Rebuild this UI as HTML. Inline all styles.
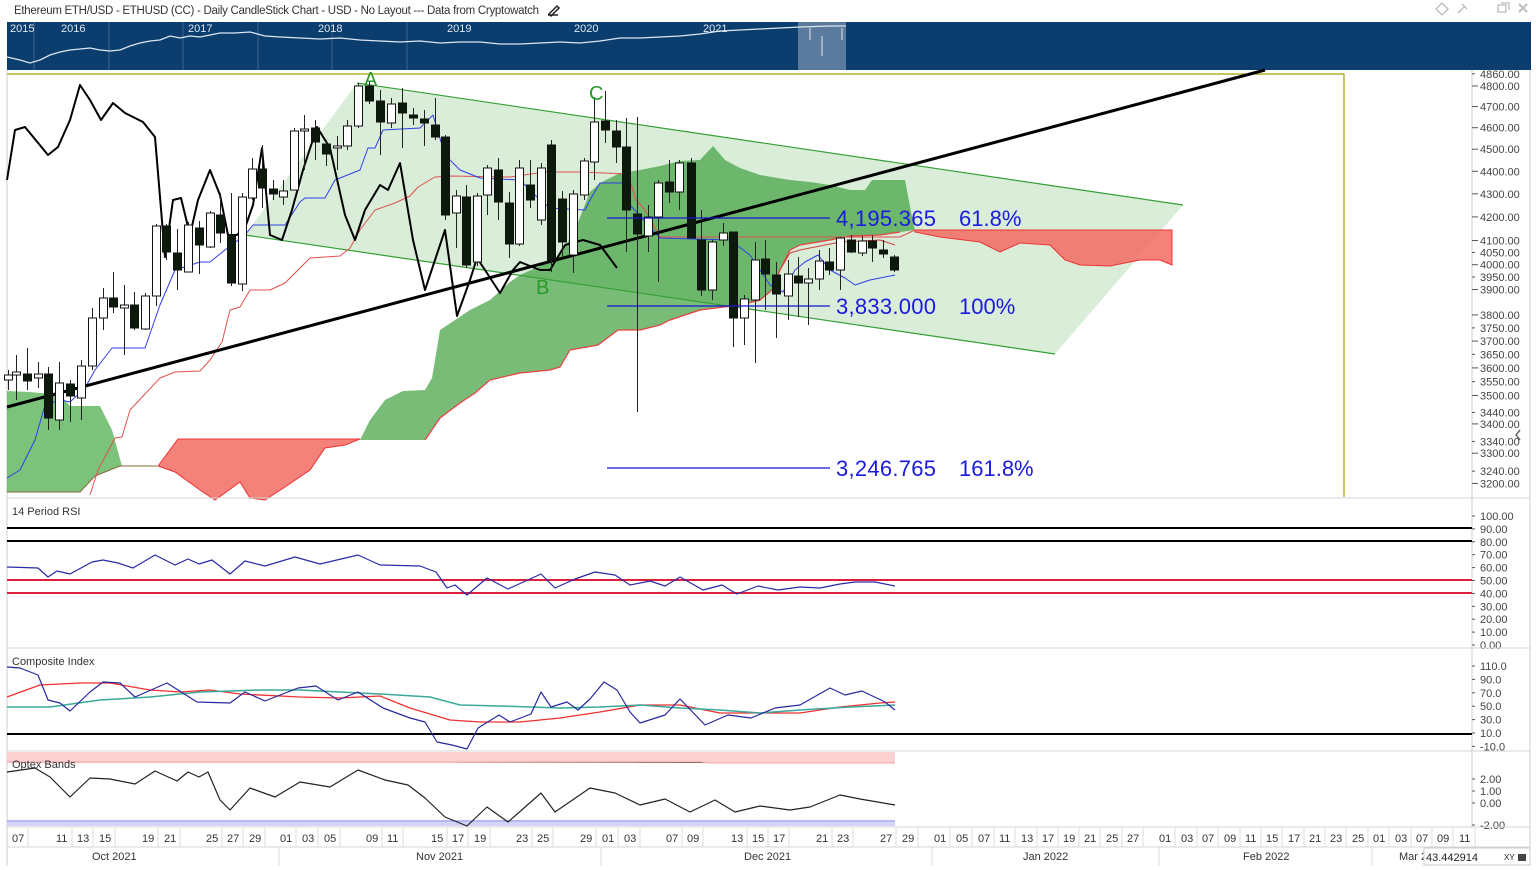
<!DOCTYPE html>
<html><head><meta charset="utf-8"><style>
html,body{margin:0;padding:0;background:#fff;overflow:hidden}
body{width:1536px;height:870px;position:relative;font-family:"Liberation Sans",sans-serif}
svg text{font-family:"Liberation Sans",sans-serif}
</style></head><body>
<svg id="s" width="1536" height="870" viewBox="0 0 1536 870" xmlns="http://www.w3.org/2000/svg">
<rect width="1536" height="870" fill="#fff"/>
<text x="14" y="14" font-size="11.5" fill="#333" textLength="525">Ethereum ETH/USD - ETHUSD (CC) - Daily CandleStick Chart - USD - No Layout --- Data from Cryptowatch</text>
<path d="M549 14l8-8 2 2-8 8zM548 15h10" stroke="#222" stroke-width="1.5" fill="none"/>
<g stroke="#bbb" fill="none" stroke-width="1.3"><path d="M1442 3l6 6-6 6-6-6z"/><path d="M1458 13l6-6M1462 4l5 5"/><path d="M1498 5h8v7h-8zM1501 3h8v7"/><path d="M1519 4l8 8M1527 4l-8 8" stroke-width="2"/></g>
<rect x="7" y="22" width="1524" height="48" fill="#0b3d6f"/>
<rect x="798" y="22" width="48" height="48" fill="#5a7a9e"/>
<g stroke="#3a6590" stroke-width="1"><path d="M34 22v48M109 22v48M183 22v48M258 22v48M332 22v48M407 22v48"/></g>
<g font-size="11" fill="#dfe8f2"><text x="10" y="32">2015</text><text x="61" y="32">2016</text><text x="188" y="32">2017</text><text x="318" y="32">2018</text><text x="447" y="32">2019</text><text x="574" y="32">2020</text><text x="703" y="32">2021</text></g>
<path d="M7 57L20 60 30 63 40 60 50 55 60 52 70 50 80 49 90 48 100 50 110 51 120 50 130 46 140 43 150 41 160 40 170 36 180 38 190 36 200 37 210 35 220 33 235 33 250 32 265 36 280 37 300 38 320 39 340 38 360 40 380 41 400 42 420 41 440 43 460 42 480 42 500 44 520 44 540 43 560 42 580 43 600 41 620 38 640 38 660 37 680 36 700 34 720 31 740 30 760 29 780 28 800 27 830 26 846 26" stroke="#dde6f0" stroke-width="1.3" fill="none"/>
<path d="M810 28v12M842 28v12M822 36v20" stroke="#9fb0c4" stroke-width="2"/>
<path d="M7 74H1344V497" stroke="#a0a000" stroke-width="1.2" fill="none"/>
<path d="M7 70V866" stroke="#ccc"/>
<path d="M1472 70V828" stroke="#ccc"/>
<path d="M1530 70V866" stroke="#ccc"/>
<g id="main"></g>
<g stroke="#1515d0" stroke-width="1.2"><path d="M607 218H830M607 306H830M607 468H830"/></g>
<g font-size="22" fill="#1a1ae0"><text x="836" y="226" textLength="100">4,195.365</text><text x="959" y="226">61.8%</text><text x="836" y="314" textLength="100">3,833.000</text><text x="959" y="314">100%</text><text x="836" y="476" textLength="100">3,246.765</text><text x="959" y="476">161.8%</text></g>
<g font-size="20" fill="#2a9a2a"><text x="364" y="86">A</text><text x="589" y="100">C</text><text x="536" y="294">B</text></g>
<g id="pax" font-size="11" fill="#444"></g>
<path d="M1520 430l-4 5 4 5" stroke="#666" stroke-width="1.5" fill="none"/>
<path d="M7 498H1530M7 648H1530M7 751H1530M7 827H1530M7 847H1530" stroke="#d5d5d5"/>
<rect x="7" y="752" width="888" height="11" fill="#fbd0d0"/>
<path d="M7 762H700L710 763H895" stroke="#f3a3a3"/>
<rect x="7" y="820" width="888" height="6" fill="#d4d4fb"/>
<path d="M7 821H895" stroke="#9b9bf0"/>
<text x="12" y="515" font-size="11" fill="#333">14 Period RSI</text>
<text x="12" y="665" font-size="11" fill="#333">Composite Index</text>
<text x="12" y="768" font-size="11" fill="#333">Optex Bands</text>
<path d="M7 528H1472M7 541H1472M7 734H1472" stroke="#000" stroke-width="2"/>
<path d="M7 580H1472M7 593H1472" stroke="#dc1f3c" stroke-width="2"/>
<g id="ind"></g>
<g id="dax" font-size="11" fill="#333"></g>
<rect x="1424" y="848" width="106" height="17" fill="#fff" stroke="#ccc"/>
<text x="1426" y="861" font-size="11" fill="#222">43.442914</text>
<text x="1504" y="860" font-size="8" fill="#222">XY</text>
<rect x="1518" y="854" width="8" height="7" fill="#444"/>
</svg>
<script>
var NS="http://www.w3.org/2000/svg";
function el(p,t,a){var e=document.createElementNS(NS,t);for(var k in a)e.setAttribute(k,a[k]);p.appendChild(e);return e;}
var M=document.getElementById('main');
function poly(pts,fill,op,stroke,sw){return el(M,'path',{d:'M'+pts.join(' ')+(fill!='none'?'Z':''),fill:fill,'fill-opacity':op||1,stroke:stroke||'none','stroke-width':sw||1});}
function line(g,pts,stroke,sw){el(g,'path',{d:'M'+pts.join(' '),fill:'none',stroke:stroke,'stroke-width':sw||1,'stroke-linejoin':'round'});}
poly(['245,235','357,83','1183,205','1055,354'],'#b9deb9',0.55);
poly(['7,391','30,392','60,395','70,406','100,406','112,430','122,466','157,466','120,466','95,476','80,492','7,492'],'#4fae4f',0.75);
poly(['158,466','178,439','360,439','345,445','325,448','310,470','285,487','265,500','250,498','240,482','215,500','200,490','175,472'],'#f26b63',0.85,'#e33',1);
var ga=['360,440','370,420','385,400','403,391','425,390','432,378','440,330','455,320','470,310','490,300','510,282','520,275','540,266','560,255','575,230','590,192','600,183','620,173','640,170','660,166','680,161','700,160','713,146','725,160','740,168','760,175','790,180','810,182','830,185','850,190','865,190','872,180','905,180','912,217','915,230'];
var gb=['900,232','880,235','850,236','830,240','800,245','790,250','780,270','772,290','760,300','740,305','700,310','670,320','660,325','640,330','618,330','598,345','570,350','560,367','550,370','520,373','490,380','475,393','460,403','440,418','425,440'];
poly(ga.concat(gb),'#3fa03f',0.7);
line(M,gb,'#e84040',1.2);
line(M,['7,492','80,492','95,476','120,466','157,466'],'#8a6a3a',1);
poly(['915,230','1172,230','1172,265','1160,260','1140,260','1110,266','1080,265','1065,260','1050,245','1020,243','1000,252','980,242','940,237','915,232'],'#f26b63',0.85,'#e33',1);
line(M,['357,83','1183,205'],'#35a035',1.2);
line(M,['245,235','1055,354'],'#35a035',1.2);
line(M,['90,495','98,470','115,438','122,437','130,410','160,378','175,372','200,371','210,360','222,342','230,310','240,307','250,290','270,290','285,283','300,268','310,258','340,256','350,248','360,230','375,210','395,203','410,196','418,187','435,177','450,176','510,177','545,172','557,172','580,172','628,174','636,200','645,210','660,237','900,237','915,230'],'#e05050',1);
line(M,['760,300','772,290','780,270','790,253','800,250','840,242','880,240','895,245'],'#d04040',1);
line(M,['7,478','20,470','35,440','45,405','60,400','70,402','85,388','95,370','112,348','145,348','160,305','175,270','200,262','210,262','225,250','245,235','253,225','285,225','300,202','305,198','325,198','335,180','360,170','368,148','375,148','383,130','420,128','433,115','445,155','460,170','480,178','520,180','540,200','550,208','585,210','590,200','600,183','626,183','630,205','660,238','730,240','750,255','760,270','770,285','783,292','795,270','805,262','818,255','830,270','845,278','855,285','870,280','895,275'],'#2f3fe8',1);
line(M,['7,180','15,130','25,127','48,155','58,147','70,120','80,85','90,100','101,120','113,103','125,113','143,122','155,137','165,257','173,200','181,198','190,235','198,200','210,170','220,195','228,235','237,235','246,225','253,205','262,148','270,235','282,240','292,210','303,170','317,127','330,148','345,215','355,240','365,210','380,185','388,190','400,163','413,240','425,290','445,230','457,316','470,280','477,258','485,270','500,293','513,270','520,262','540,270','550,270','565,245','583,240','600,245','617,268'],'#000',2);
line(M,['7,407','1265,70'],'#000',3);
var C=[[8,375,380,370,390,0],[16,372,375,355,400,0],[27,374,381,348,390,1],[38,374,378,362,388,0],[48,374,418,367,430,1],[59,383,420,362,430,0],[70,384,396,380,422,1],[81,366,398,360,420,0],[92,318,366,308,370,0],[103,298,318,288,330,0],[113,298,307,272,313,1],[124,305,308,285,355,0],[134,305,328,292,330,1],[145,296,329,293,330,0],[156,226,296,224,306,0],[166,226,252,224,260,1],[177,253,270,229,290,1],[188,225,272,222,272,0],[199,228,245,221,274,1],[210,213,247,211,248,0],[220,215,233,193,243,1],[231,235,283,193,286,1],[242,197,284,193,291,0],[252,169,198,158,200,0],[262,169,188,145,208,1],[273,189,194,180,200,1],[283,191,197,180,205,0],[294,131,190,128,190,0],[304,129,131,115,170,0],[315,128,142,120,160,1],[326,144,154,140,166,1],[337,146,148,136,170,0],[347,126,146,120,150,0],[358,86,126,83,128,0],[369,86,101,82,104,1],[380,101,122,90,155,1],[391,104,123,98,128,0],[402,103,113,88,148,1],[413,115,118,108,125,1],[424,119,123,110,146,1],[435,125,137,98,140,1],[445,137,215,135,220,1],[456,196,213,190,248,0],[466,197,265,185,268,1],[477,196,262,193,266,0],[487,168,195,165,215,0],[498,170,202,158,220,1],[509,203,244,192,258,1],[519,168,244,160,246,0],[530,185,200,160,208,1],[541,168,220,163,225,0],[551,145,260,140,272,1],[562,199,242,191,258,1],[573,194,255,190,273,0],[584,161,195,158,200,0],[594,122,162,97,180,0],[605,121,130,91,143,1],[616,131,147,120,163,1],[626,147,210,118,252,1],[637,214,234,117,412,1],[648,217,236,205,252,0],[658,183,217,180,282,0],[669,182,192,160,203,1],[679,163,192,160,210,0],[691,163,238,158,238,1],[701,240,290,210,296,1],[712,242,290,240,300,0],[723,233,240,223,246,0],[733,232,318,232,347,1],[744,299,318,295,345,0],[755,260,300,242,363,0],[765,259,274,240,310,1],[776,275,294,262,338,1],[788,274,296,260,320,0],[798,276,283,257,317,1],[808,279,283,268,325,0],[819,261,279,250,290,0],[829,262,270,248,275,1],[840,238,270,237,290,0],[851,240,252,235,253,1],[862,241,253,236,256,0],[872,241,248,235,262,1],[883,250,254,240,258,1],[894,257,270,255,272,1]];
C.forEach(function(c){el(M,'path',{d:'M'+(c[0]+0.5)+' '+c[3]+'V'+c[4],stroke:'#222','stroke-width':1});el(M,'rect',{x:c[0]-3.5,y:c[1],width:8,height:Math.max(1,c[2]-c[1]),fill:c[5]?'#0c1a0c':'#fff',stroke:'#111','stroke-width':1});});
var P=document.getElementById('pax');
[[4860,'- '],[4800],[4700],[4600],[4500],[4400],[4300],[4200],[4100],[4050,'- '],[4000],[3950,'- '],[3900],[3800],[3750,'- '],[3700],[3650,'- '],[3600],[3550,'- '],[3500],[3440,'- '],[3400],[3340,'- '],[3300],[3240,'- '],[3200]].forEach(function(a){var y=86+(Math.log(4800)-Math.log(a[0]))*980;el(P,'path',{d:'M1472 '+y.toFixed(1)+'h'+(a[1]?3:6),stroke:'#555'});var t=el(P,'text',{x:1480,y:(y+4).toFixed(1)});t.textContent=a[0]+'.00';});
function lab(vals,y0,dy){vals.forEach(function(v,i){var y=y0+i*dy;el(P,'path',{d:'M1472 '+y+'h3',stroke:'#555'});var t=el(P,'text',{x:1480,y:y+4});t.textContent=v;});}
lab(['100.00','90.00','80.00','70.00','60.00','50.00','40.00','30.00','20.00','10.00','0.00'],516,12.9);
lab(['110.0','90.0','70.0','50.0','30.0','10.0','-10.0'],666,13.4);
lab(['2.00','1.00','0.00'],779,12);
lab(['-2.00'],825,0);
var I=document.getElementById('ind');
line(I,['7,567','38,568','48,577','57,571','70,574','92,562','103,560','118,563','133,568','155,555','175,565','188,559','199,564','212,560','230,574','245,561','265,566','295,557','320,564','358,555','380,565','420,566','436,572','447,588','455,585','467,595','487,578','508,589','541,574','555,588','575,579','595,572','615,575','630,585','650,581','665,586','680,577','703,590','722,585','737,594','758,586','778,590','800,587','820,588','840,584','855,582','875,582','895,586'],'#2a2aa8',1.2);
line(I,['7,697','40,685','80,683','110,683','150,690','180,692','210,690','240,694','300,697','340,698','380,696','410,708','450,720','480,722','520,722','560,718','600,712','640,705','680,705','720,713','760,713','800,713','840,707','880,703','895,702'],'#f03030',1.3);
line(I,['7,707','50,707','100,700','150,697','200,692','260,690','300,690','340,692','380,694','430,697','460,705','500,706','560,708','600,707','640,705','680,708','720,710','760,713','800,710','850,707','895,705'],'#3aa89a',1.5);
line(I,['7,667','20,668','38,675','48,700','60,703','70,711','90,692','103,682','120,683','135,697','167,683','197,702','230,703','245,692','265,701','298,688','316,686','338,700','358,692','383,708','410,718','425,722','437,742','452,745','467,749','478,728','499,715','510,722','531,714','541,692','551,707','567,702','578,710','590,699','604,682','617,690','630,712','640,723','665,715','680,699','705,725','728,715','751,718','775,708','800,705','830,688','845,695','862,691','885,702','895,710'],'#28289e',1.2);
line(I,['7,772','35,768','50,777','70,797','90,778','110,779','135,784','155,771','177,781','188,772','199,777','208,772','220,800','230,810','250,788','275,797','300,782','330,787','358,770','385,780','408,785','425,798','445,817','467,826','487,807','508,822','541,793','555,812','590,788','615,793','640,805','665,799','690,812','715,800','735,812','760,806','790,810','810,807','840,795','860,799','895,805'],'#222',1.2);
var D=document.getElementById('dax');
var ds=[['07',18],['11',62],['13',83],['15',105],['19',148],['21',170],['25',212],['27',233],['29',255],['01',286],['03',308],['05',330],['09',372],['11',393],['15',437],['17',458],['19',480],['23',522],['25',543],['29',586],['01',608],['03',630],['07',672],['09',693],['13',737],['15',758],['17',779],['21',822],['23',843],['27',886],['29',908],['01',940],['05',962],['07',984],['11',1005],['13',1027],['17',1048],['19',1069],['21',1090],['25',1112],['27',1133],['01',1165],['03',1187],['07',1208],['09',1230],['11',1251],['15',1272],['17',1294],['21',1315],['23',1336],['25',1358],['01',1379],['03',1401],['07',1422],['09',1443],['11',1465]];
ds.forEach(function(d){var t=el(D,'text',{x:d[1]-6,y:842});t.textContent=d[0];el(D,'path',{d:'M'+(d[1]+10)+' 828V847',stroke:'#ddd'});});
[279,601,932,1159,1372].forEach(function(x){el(D,'path',{d:'M'+x+' 847V866',stroke:'#ddd'});});
[['Oct 2021',92],['Nov 2021',416],['Dec 2021',744],['Jan 2022',1023],['Feb 2022',1243],['Mar 2',1399]].forEach(function(m){var t=el(D,'text',{x:m[1],y:860});t.textContent=m[0];});
</script>
</body></html>
